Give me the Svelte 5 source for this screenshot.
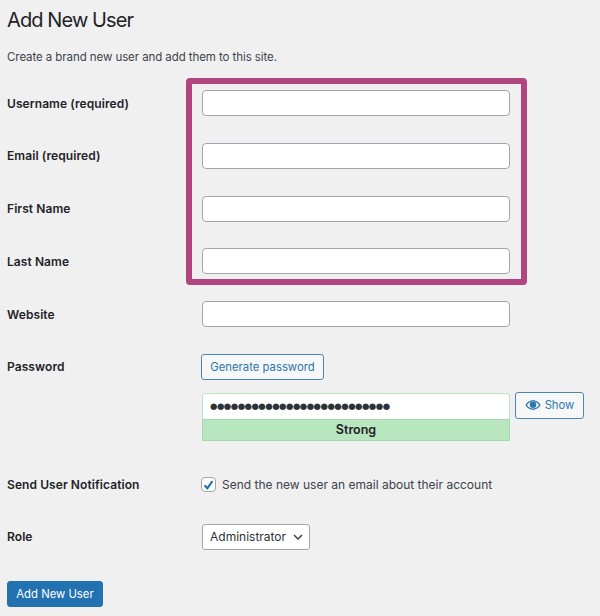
<script>
  const highlighted = ['Username (required)', 'Email (required)', 'First Name', 'Last Name'];
  const dots = '●'.repeat(26);
</script>

<main class="page">
  <h1>Add New User</h1>
  <p class="intro">Create a brand new user and add them to this site.</p>

  <form on:submit|preventDefault>
    <div class="group">
      {#each highlighted as label}
        <div class="row">
          <span class="label">{label}</span>
          <div class="field"><input type="text" aria-label={label} /></div>
        </div>
      {/each}
      <div class="highlight"></div>
    </div>

    <div class="row">
      <span class="label">Website</span>
      <div class="field"><input type="text" aria-label="Website" /></div>
    </div>

    <div class="row password-row">
      <span class="label">Password</span>
      <div class="field">
        <button type="button" class="ghost generate">Generate password</button>
        <div class="pass-line">
          <div class="pass-box">
            <div class="pass-value">{dots}</div>
            <div class="strength">Strong</div>
          </div>
          <button type="button" class="ghost show">
            <svg width="16" height="16" viewBox="0 0 20 20" aria-hidden="true">
              <path fill="currentColor" d="M10 4C5.5 4 2 7.2.5 10 2 12.800 5.500 16 10 16s8-3.200 9.500-6C18 7.200 14.500 4 10 4zm0 10.500c-3.300 0-6-2-7.600-4.500C4 7.500 6.700 5.500 10 5.500s6 2 7.600 4.500c-1.600 2.500-4.300 4.500-7.600 4.500z"/>
              <circle cx="10" cy="9.600" r="4.100" fill="currentColor"/>
            </svg>
            Show
          </button>
        </div>
      </div>
    </div>

    <div class="row notify-row">
      <span class="label">Send User Notification</span>
      <div class="field check-line">
        <span class="checkbox">
          <svg width="14" height="14" viewBox="0 0 14 14" aria-hidden="true">
            <path d="M2.800 7.300l2.900 3.200L11.200 2.800" fill="none" stroke="#2271b1" stroke-width="2.200"/>
          </svg>
        </span>
        Send the new user an email about their account
      </div>
    </div>

    <div class="row">
      <span class="label">Role</span>
      <div class="field">
        <div class="select">
          Administrator
          <svg width="10" height="6" viewBox="0 0 10 6" aria-hidden="true">
            <path d="M1 1l4 4 4-4" fill="none" stroke="#3c434a" stroke-width="1.500"/>
          </svg>
        </div>
      </div>
    </div>

    <button type="submit" class="primary">Add New User</button>
  </form>
</main>

<style>
  :global(body) {
    margin: 0;
    background: #f0f0f1;
  }

  .page {
    height: 616px;
    box-sizing: border-box;
    padding: 8px 0 0 7px;
    overflow: hidden;
    font-family: Inter, "Liberation Sans", sans-serif;
    font-size: 12px;
    color: #3c434a;
  }

  h1 {
    margin: 0;
    font-size: 20px;
    line-height: 24px;
    font-weight: 400;
    letter-spacing: -0.9px;
    color: #1d2327;
  }

  .intro {
    margin: 17px 0 0;
    font-size: 11.500px;
    letter-spacing: -0.080px;
    line-height: 16px;
  }

  form {
    margin-top: 25px;
  }

  .group {
    position: relative;
  }

  .row {
    display: grid;
    grid-template-columns: 195px 308px;
    align-items: center;
    height: 26px;
    padding-bottom: 26.750px;
  }

  .label {
    font-weight: 600;
    color: #1d2327;
    letter-spacing: 0.080px;
    transform: translateY(-0.500px);
  }

  input {
    display: block;
    width: 100%;
    height: 26px;
    box-sizing: border-box;
    border: 1px solid #a2a5a9;
    border-radius: 4px;
    background: #fff;
  }

  .highlight {
    position: absolute;
    left: 179px;
    top: -12px;
    width: 341px;
    height: 207px;
    box-sizing: border-box;
    border: 6px solid #b1457f;
    border-radius: 4px;
    pointer-events: none;
  }

  .password-row {
    height: auto;
    align-items: start;
    padding-bottom: 36px;
  }

  .password-row .label {
    line-height: 26px;
  }

  .ghost {
    display: inline-flex;
    align-items: center;
    box-sizing: border-box;
    height: 26px;
    border: 1px solid #4a86b5;
    border-radius: 3px;
    background: #f6f7f7;
    color: #2f76ad;
    font: inherit;
    font-size: 11.300px;
    cursor: pointer;
  }

  .generate {
    margin-left: -1px;
    width: 123px;
    justify-content: center;
    padding: 0;
  }

  .pass-line {
    display: flex;
    gap: 5px;
    margin-top: 13px;
    width: 382px;
  }

  .pass-box {
    width: 308px;
    flex: none;
  }

  .pass-value {
    height: 26px;
    box-sizing: border-box;
    border: 1px solid #b8e6bf;
    border-bottom: 0;
    border-radius: 3px 3px 0 0;
    background: #fff;
    color: #2c3338;
    font-size: 8.500px;
    line-height: 25px;
    letter-spacing: -0.510px;
    padding-left: 7px;
    white-space: nowrap;
    overflow: hidden;
    font-family: "DejaVu Sans", sans-serif;
  }

  .strength {
    height: 22px;
    box-sizing: border-box;
    border: 1px solid #a5d8ae;
    background: #b8e6bf;
    color: #1d2327;
    font-size: 12.500px;
    font-weight: 600;
    line-height: 20px;
    text-align: center;
  }

  .show {
    width: 69px;
    height: 27px;
    margin-top: -1px;
    justify-content: center;
    gap: 4px;
    padding: 0;
  }

  .notify-row {
    padding-bottom: 31px;
    height: 16px;
  }

  .check-line {
    display: flex;
    align-items: center;
    gap: 6px;
    margin-left: -1px;
    width: 330px;
    white-space: nowrap;
  }

  .checkbox {
    display: inline-flex;
    width: 15px;
    height: 15px;
    box-sizing: border-box;
    align-items: center;
    justify-content: center;
    border: 1px solid #a2a5a9;
    border-radius: 4px;
    background: #fff;
  }

  .select {
    display: inline-flex;
    align-items: center;
    gap: 7px;
    width: 108px;
    height: 26px;
    box-sizing: border-box;
    padding-left: 7px;
    border: 1px solid #a2a5a9;
    border-radius: 3px;
    background: #fff;
    color: #2c3338;
    white-space: nowrap;
  }

  .primary {
    display: block;
    width: 96px;
    height: 26px;
    margin-top: 4px;
    padding: 0;
    border: 1px solid #2271b1;
    border-radius: 3px;
    background: #2271b1;
    color: #fff;
    font: inherit;
    font-size: 11.300px;
    cursor: pointer;
  }
</style>
